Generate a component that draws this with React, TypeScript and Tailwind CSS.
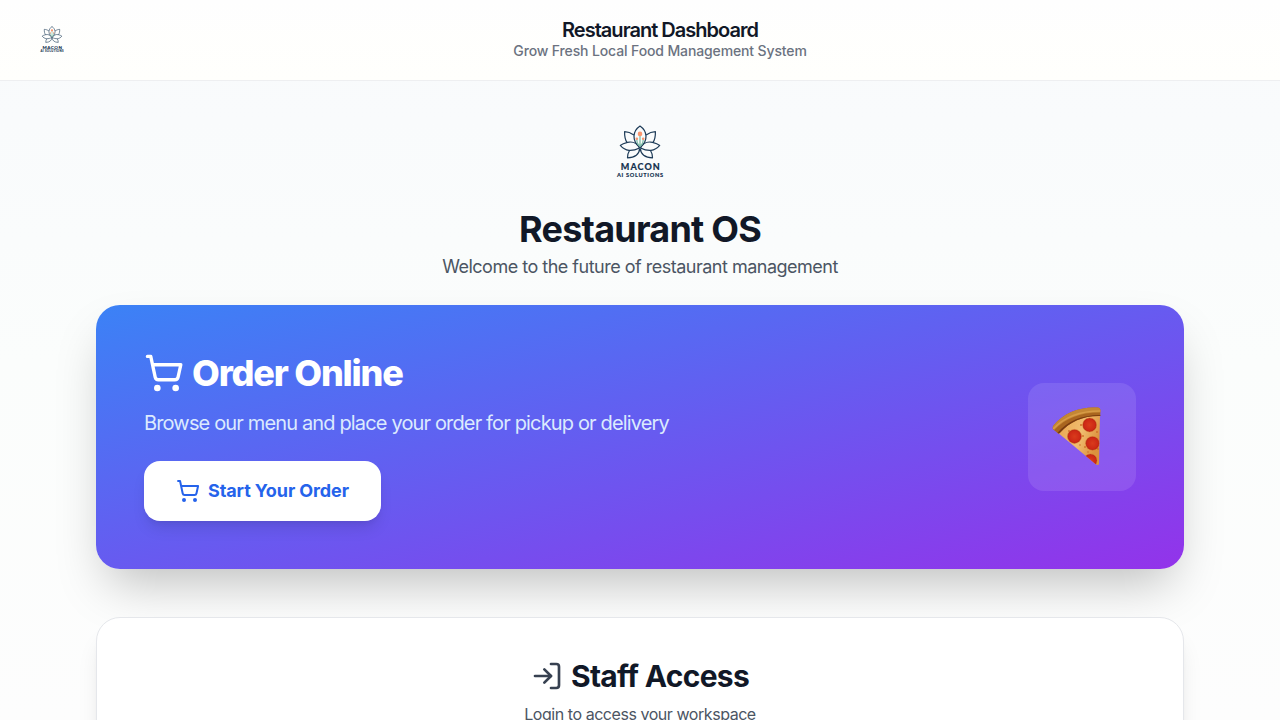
import { LogIn, ShoppingCart } from 'lucide-react';

function Logo({ className }: { className: string }) {
  return (
    <svg viewBox="0 0 80 80" className={className} role="img" aria-label="Macon AI Solutions">
      <g fill="none" stroke="#1c3a57" strokeWidth="1.2" strokeLinejoin="round">
        <path d="M40 34.5C35.5 31 33.8 27 34 23C34.3 18.5 37 15 40 13C43 15 45.7 18.5 46 23C46.2 27 44.5 31 40 34.5Z" />
        <path d="M33.9 22C31 20 28 18.8 24.6 18.7C24.5 23 25 26.5 27 29.5" />
        <path d="M46.1 22C49 20 52 18.8 55.4 18.7C55.5 23 55 26.5 53 29.5" />
        <path d="M39.5 35C37 29.5 31.5 28.5 27.5 29.3C24.5 30 22 31 20.3 32.4C22.5 35 25.5 37 29 37.4C33 37.7 36.5 36.5 39.5 35Z" />
        <path d="M40.5 35C43 29.5 48.5 28.5 52.5 29.3C55.5 30 58 31 59.7 32.4C57.5 35 54.5 37 51 37.4C47 37.7 43.5 36.5 40.5 35Z" />
        <path d="M39.6 35.5C39.5 41 35 44.8 27.5 44.8C27.5 42 28.2 39.5 29.5 37.5" />
        <path d="M40.4 35.5C40.5 41 45 44.8 52.5 44.8C52.5 42 51.8 39.5 50.5 37.5" />
      </g>
      <path d="M40 34V22M40 33Q36.6 31 36.8 26M40 33Q43.4 31 43.2 26" fill="none" stroke="#80bfa9" strokeWidth="1.3" />
      <circle cx="40" cy="20.9" r="2.3" fill="#fb966e" />
      <circle cx="36.8" cy="25.7" r="1.3" fill="#fb966e" />
      <circle cx="43.2" cy="25.7" r="1.3" fill="#fb966e" />
      <text x="20.8" y="57" textLength="39" fontFamily="Lato, sans-serif" fontWeight="900" fontSize="9" fill="#163350" stroke="#163350" strokeWidth="0.15">MACON</text>
      <text x="17" y="64.2" textLength="46" fontFamily="Lato, sans-serif" fontWeight="900" fontSize="5.6" fill="#163350" stroke="#163350" strokeWidth="0.12">AI SOLUTIONS</text>
    </svg>
  );
}

function Pizza() {
  return (
    <svg viewBox="0 0 60 60" className="size-[60px]" role="img" aria-label="Pizza">
      <defs>
        <clipPath id="slice">
          <path d="M5 25C15 15 30 8.5 48 8L47 57Q46 59 43.5 57Z" />
        </clipPath>
        <clipPath id="crustShape">
          <path d="M1.2 22.5Q0 21 1.5 18.5C12 5.5 28 -0.5 45.5 0.5Q48.3 0.5 48.3 3V9C32 8.5 18 14.5 8 25.8Q6.8 27.2 5 25.5Z" />
        </clipPath>
        <linearGradient id="cheese" x1="0" y1="0" x2="1" y2="0.4">
          <stop offset="0" stopColor="#e9a24b" />
          <stop offset="0.6" stopColor="#f0bd70" />
          <stop offset="1" stopColor="#dc913d" />
        </linearGradient>
        <radialGradient id="pepperoni">
          <stop offset="0" stopColor="#d93b1c" />
          <stop offset="0.8" stopColor="#cd2815" />
          <stop offset="1" stopColor="#a91b10" />
        </radialGradient>
      </defs>
      <path d="M5 25C15 15 30 8.5 48 8L47 57Q46 59 43.5 57Z" fill="url(#cheese)" />
      <g clipPath="url(#slice)">
        <g fill="#d06f27">
          <circle cx="29" cy="18" r="1" />
          <circle cx="17" cy="24" r="0.9" />
          <circle cx="31" cy="29" r="1" />
          <circle cx="45" cy="25" r="0.9" />
          <circle cx="33" cy="40" r="0.9" />
          <circle cx="46" cy="42" r="0.9" />
          <circle cx="36" cy="45" r="0.8" />
          <circle cx="28" cy="38" r="0.8" />
        </g>
        <g fill="url(#pepperoni)" stroke="#dc7a30" strokeWidth="0.5">
          <circle cx="37.6" cy="17.9" r="7" />
          <circle cx="22.5" cy="29.4" r="7" />
          <circle cx="40.5" cy="36.3" r="6.9" />
          <circle cx="38.4" cy="53.5" r="6.6" />
        </g>
      </g>
      <g clipPath="url(#crustShape)">
        <path d="M-2 -2H50V30H-2Z" fill="#a9651f" />
        <path d="M0 21C12 8 28 2 50 2.5" fill="none" stroke="#c48634" strokeWidth="6" />
        <path d="M1 22C13 9.500 29 3.500 50 4" fill="none" stroke="#d79b46" strokeWidth="1.6" />
        <path d="M6 27C16 15 31 8.800 50 9.200" fill="none" stroke="#7a3c10" strokeWidth="2.4" />
      </g>
    </svg>
  );
}

export default function App() {
  return (
    <div className="h-screen overflow-hidden bg-linear-to-b/srgb from-[#f8fafc] via-[#fbfdfc] to-[#fdfdfd] font-['Inter',sans-serif] text-[#111827]">
      <header className="flex h-[81px] items-center border-b border-[#eeeff1] bg-linear-to-b/srgb from-[#fefefe] to-[#fffffc] px-8">
        <Logo className="size-10" />
        <div className="flex-1 text-center">
          <h1 className="mt-px text-xl leading-5 font-semibold tracking-[-0.98px]"><span>Restaurant Dashboard</span></h1>
          <p className="mt-px text-sm leading-5 font-medium tracking-[-0.13px] text-[#6b7280]"><span>Grow Fresh Local Food Management System</span></p>
        </div>
      </header>
      <main className="mx-auto max-w-6xl px-8 pt-8">
        <div className="flex flex-col items-center text-center">
          <Logo className="size-20" />
          <h2 className="mt-4 text-4xl leading-10 font-bold tracking-[-0.78px]"><span>Restaurant OS</span></h2>
          <p className="mt-1 text-lg leading-7 tracking-[-0.5px] text-[#4b5563]"><span>Welcome to the future of restaurant management</span></p>
        </div>
        <section className="mt-6 flex items-center justify-between rounded-3xl bg-linear-to-br/srgb from-[#3b82f6] to-[#9333ea] p-12 shadow-2xl">
          <div>
            <h2 className="flex items-center gap-2 text-4xl leading-10 font-extrabold tracking-[-1.2px] text-white">
              <ShoppingCart className="size-10" />
              <span>Order Online</span>
            </h2>
            <p className="mt-4 text-xl leading-7 tracking-[-0.85px] text-[#dbeafe]"><span>Browse our menu and place your order for pickup or delivery</span></p>
            <button className="mt-6 flex h-15 w-[237px] items-center gap-2 rounded-2xl bg-white px-8 text-lg font-bold tracking-[-0.11px] whitespace-nowrap text-[#2563eb] shadow-lg">
              <ShoppingCart className="size-6 shrink-0" />
              <span>Start Your Order</span>
            </button>
          </div>
          <div className="rounded-2xl bg-white/10 p-6">
            <Pizza />
          </div>
        </section>
        <section className="mt-12 h-80 rounded-3xl border border-[#e5e7eb] bg-white pt-10 text-center shadow-xl">
          <h2 className="flex items-center justify-center gap-2 text-3xl leading-9 font-bold tracking-[-0.7px]">
            <LogIn className="size-8 text-[#374151]" />
            <span>Staff Access</span>
          </h2>
          <p className="mt-2 text-base leading-6 tracking-[-0.45px] text-[#4b5563]"><span>Login to access your workspace</span></p>
        </section>
      </main>
    </div>
  );
}
